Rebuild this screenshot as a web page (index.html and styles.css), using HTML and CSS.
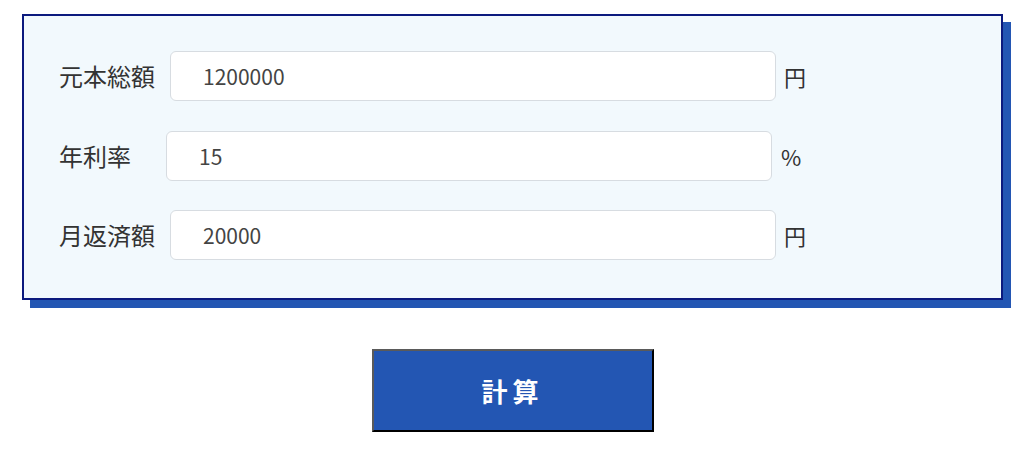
FILE: index.html
```html
<!DOCTYPE html>
<html lang="ja">
<head>
<meta charset="utf-8">
<title>返済計算</title>
<link rel="stylesheet" href="styles.css">
</head>
<body>
<main class="page">
  <section class="card">
    <div class="row">
      <label class="label">元本総額</label>
      <div class="field"><span class="value">1200000</span></div>
      <span class="unit">円</span>
    </div>
    <div class="row">
      <label class="label">年利率</label>
      <div class="field"><span class="value">15</span></div>
      <span class="unit unit-pct">%</span>
    </div>
    <div class="row">
      <label class="label">月返済額</label>
      <div class="field"><span class="value">20000</span></div>
      <span class="unit">円</span>
    </div>
  </section>
  <div class="actions">
    <button class="calc-btn" type="button">計算</button>
  </div>
</main>
</body>
</html>
```

FILE: styles.css
```css
html, body {
  margin: 0;
  padding: 0;
  background: #ffffff;
}

body {
  font-family: "Noto Sans CJK JP", "Noto Sans", sans-serif;
  color: #333333;
}

.page {
  padding: 14px 21px 0 22px;
}

.card {
  background: #f2f9fd;
  border: 2px solid #0c1a7e;
  box-shadow: 8px 8px 0 #2356b3;
  box-sizing: border-box;
  height: 286px;
  padding: 35px 35px 0 35px;
  display: flex;
  flex-direction: column;
  gap: 29.5px;
}

.row {
  display: flex;
  align-items: center;
  height: 50px;
}

.label {
  flex: 0 0 92px;
  min-width: min-content;
  margin-right: 15px;
  font-size: 24px;
  line-height: 1;
  color: #333333;
  white-space: nowrap;
}

.field {
  width: 606px;
  height: 50px;
  box-sizing: border-box;
  background: #ffffff;
  border: 1px solid #d7dce1;
  border-radius: 6px;
  padding-left: 32px;
  display: flex;
  align-items: center;
}

.value {
  font-size: 21px;
  color: #444444;
}

.unit {
  margin-left: 8px;
  font-size: 22px;
  color: #333333;
}

.unit-pct {
  margin-left: 9px;
  font-size: 22px;
}

.actions {
  display: flex;
  justify-content: center;
  padding-top: 49px;
}

.calc-btn {
  width: 282px;
  height: 83px;
  background: #2356b3;
  color: #ffffff;
  font-family: "Noto Sans CJK JP", sans-serif;
  font-size: 26px;
  font-weight: 700;
  letter-spacing: 5px;
  padding: 0;
  border-style: solid;
  border-width: 2px;
  border-color: #5a5a5a #000000 #000000 #5a5a5a;
  cursor: pointer;
}
```
